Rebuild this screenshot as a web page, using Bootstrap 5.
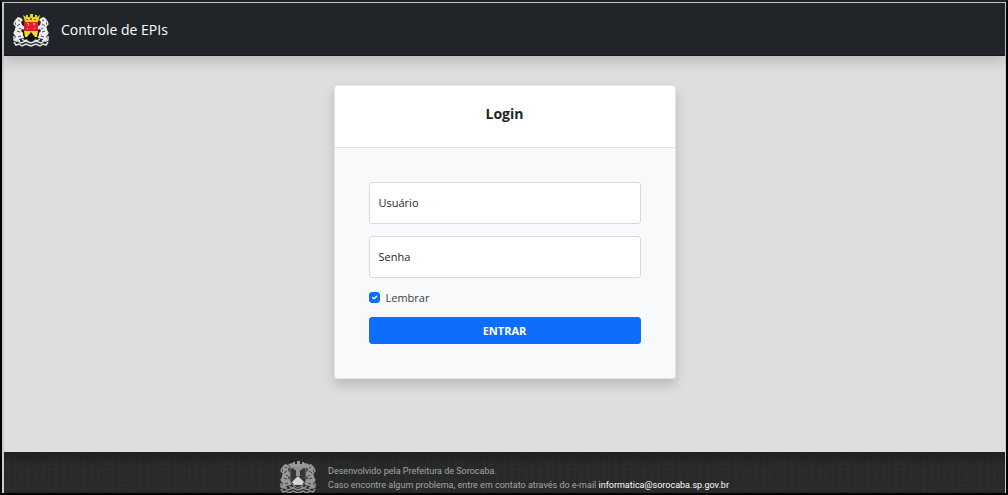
<!DOCTYPE html>
<html lang="pt-BR">
<head>
<meta charset="utf-8">
<meta name="viewport" content="width=device-width, initial-scale=1">
<title>Controle de EPIs</title>
<link href="https://cdn.jsdelivr.net/npm/bootstrap@5.3.0/dist/css/bootstrap.min.css" rel="stylesheet">
<style>
  body { font-family: "Open Sans", "Noto Sans", sans-serif; font-size: 11px; background: #000; }
  .window-frame { border: 2px solid #000; border-top-color: #222; }
  .window-inner { border: solid #c9c9cf; border-width: 1px 1px 0 2px; background: #dedede; }
  .topbar { min-height: 53px; padding-top: 1px; background: #212529; box-shadow: 0 6px 12px rgba(0,0,0,.16); border-bottom: 1px solid #15181f; }
  .brand-link { margin-left: 9px; font-size: 14px; }
  .crest { width: 36px; height: 34px; }
  .crest-grey { filter: grayscale(1); opacity: .8; }
  .login-area { padding-top: 29px; }
  .login-card { width: 342px; border: 1px solid #e4e4e6; border-radius: 3px; background: #f8f9fb; box-shadow: 0 6px 12px rgba(0,0,0,.17); }
  .login-card .card-header { padding-top: 18px; padding-bottom: 23px; border-color: #dfe1e4; }
  .login-card h1 { font-size: 14px; line-height: 20px; }
  .login-card .card-body { padding: 34px; }
  .login-card .form-floating > .form-control { height: 42px; min-height: 42px; padding: 9px; font-size: 11px; border-color: #d5dae0; border-radius: 3px; }
  .login-card .form-floating > label { padding: 12px 9px; font-size: 11px; line-height: 16px; color: #212529; }
  .login-card .form-check { min-height: 0; gap: 6px; line-height: 15px; color: #3c4146; }
  .login-card .form-check-input { width: 11px; height: 11px; border-radius: 3px; }
  .login-card .btn { height: 27px; font-size: 11px; line-height: 16px; border-radius: 3px; }
  .site-footer { height: 41px; color: #a5a5a5; font-family: Roboto, sans-serif; font-size: 9px; line-height: 14px; overflow: hidden; background-color: #282a29;
    background-image: linear-gradient(rgba(0,0,0,.25), transparent 14px),
      radial-gradient(circle, #2b2d2c 1px, transparent 2px), radial-gradient(circle, #252726 1px, transparent 2px), radial-gradient(circle, #2a2c2b 1px, transparent 2px);
    background-size: auto, 7px 5px, 5px 9px, 11px 7px; }
  .site-footer a { color: #fff; }
</style>
</head>
<body>
<svg class="d-none" aria-hidden="true">
  <symbol id="crest" viewBox="0 0 36 34">
    <g id="supporter">
      <path fill="#eee" d="M2 7l3-3 3 1 2 2-2 2 1 3 3 2v3l-3-1-1 2 3 3v4l-5 1-3 3-2-2 2-3-2-3 1-5 1-4z"/>
      <path fill="none" stroke="#eee" stroke-width="1.3" d="M2 8l-1 3 2 2M3 17l-2 3 2 2M5 22l-2 3 4 3"/>
      <path fill="none" stroke="#25282b" stroke-width=".8" d="M5 7l2 1M4 13l3-2M4 18l3 1M6 15l2 1M5 24l3-1"/>
      <path fill="none" stroke="#e4e4e4" stroke-width="1.5" d="M1 23v4l4 1 3 2 5-2 5 2M1 29l2 3 3-1 3 2 4-2 5 2M9 26l3 2 4-2"/>
    </g>
    <use href="#supporter" transform="matrix(-1 0 0 1 36 0)"/>
    <path fill="#e3d51b" d="M10 2l3 2V2h2v2h2V1h3v3h2V2h2v2l3-2-2 7H12z"/>
    <path fill="#736e12" d="M13 6h2v1h-2zm4-1h2v2h-2zm4 1h2v1h-2z"/>
    <path fill="#111" d="M10 18h16v4q-1 4-8 6-7-2-8-6z"/>
    <path fill="#e51d2b" d="M11 9h14v9H11z"/>
    <path fill="none" stroke="#eaa9ac" d="M14 10l2 1-1 2M22 10l-2 1 2 1M14 15l1 1M21 16l1-1"/>
    <path fill="#f1df15" d="M11 18h14l-1 6h-2l-4-5-4 5h-2z"/>
  </symbol>
  <symbol id="crest-seal" viewBox="0 0 36 34">
    <use href="#supporter" opacity=".7"/>
    <use href="#supporter" opacity=".7" transform="matrix(-1 0 0 1 36 0)"/>
    <path fill="#b5b5b5" d="M8 4l5-1V2h2v2h2V1h3v3h2V2h2v1l5 1-3 4H11z"/>
    <path fill="#383938" stroke="#999" d="M10 8h16v13q-1 4-8 7-7-3-8-7z"/>
    <path fill="#aaa" d="M14 8h8v2h-2v6h-4v-6h-2z"/>
    <path fill="#fff" d="M18 16l6 6-2 3h-8l-2-3z"/>
  </symbol>
</svg>
<div class="window-frame min-vh-100 d-flex flex-column">
  <div class="window-inner flex-grow-1 d-flex flex-column">
    <nav class="navbar navbar-dark topbar px-0 pb-0">
      <a class="navbar-brand brand-link d-flex align-items-center gap-2 p-0" href="#">
        <svg class="crest" role="img" aria-label="Brasão de Sorocaba"><use href="#crest"/></svg>
        <span class="ms-1">Controle de EPIs</span>
      </a>
    </nav>
    <main class="login-area flex-grow-1 d-flex justify-content-center align-items-start px-3 pb-3">
      <div class="card login-card">
        <div class="card-header bg-white text-center"><h1 class="m-0 fw-bold">Login</h1></div>
        <form class="card-body">
          <div class="form-floating mb-2 pb-1">
            <input type="text" class="form-control" id="user" placeholder="Usuário">
            <label for="user">Usuário</label>
          </div>
          <div class="form-floating mb-2 pb-1">
            <input type="password" class="form-control" id="pass" placeholder="Senha">
            <label for="pass">Senha</label>
          </div>
          <div class="form-check d-flex align-items-center p-0 mb-2 pb-1">
            <input class="form-check-input m-0" type="checkbox" id="remember" checked>
            <label for="remember">Lembrar</label>
          </div>
          <button type="button" class="btn btn-primary w-100 fw-bold py-1">ENTRAR</button>
        </form>
      </div>
    </main>
    <footer class="site-footer d-flex justify-content-center">
      <div class="d-flex align-items-start gap-2 pt-2">
        <svg class="crest crest-grey flex-shrink-0" role="img" aria-label="Brasão de Sorocaba"><use href="#crest-seal"/></svg>
        <p class="m-0 pt-1 ps-1">Desenvolvido pela Prefeitura de Sorocaba.<br>Caso encontre algum problema, entre em contato através do e-mail <a class="text-decoration-none" href="mailto:informatica@sorocaba.sp.gov.br">informatica@sorocaba.sp.gov.br</a></p>
      </div>
    </footer>
  </div>
</div>
<script src="https://cdn.jsdelivr.net/npm/bootstrap@5.3.0/dist/js/bootstrap.bundle.min.js"></script>
</body>
</html>
